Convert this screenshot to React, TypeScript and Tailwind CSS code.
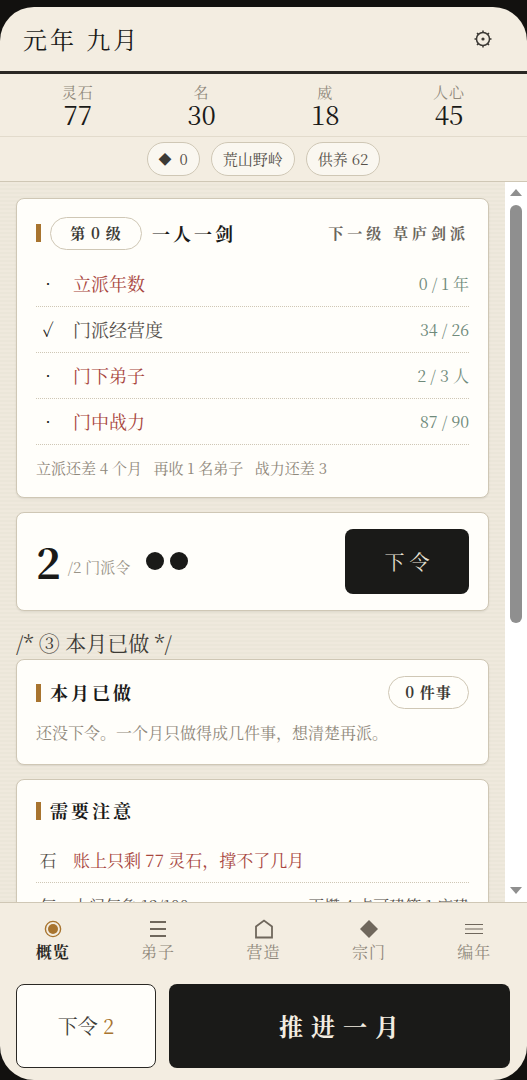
import React from "react";

const Mark = () => <span className="w-[5px] h-[18px] bg-[#a8742f] shrink-0" />;

const reqs = [
  { m: "•", l: "立派年数", v: "0 / 1 年", bad: true },
  { m: "✓", l: "门派经营度", v: "34 / 26", bad: false },
  { m: "•", l: "门下弟子", v: "2 / 3 人", bad: true },
  { m: "•", l: "门中战力", v: "87 / 90", bad: true },
];

const Card = ({ className, children }: { className?: string; children: React.ReactNode }) => (
  <section className={"shrink-0 rounded-[8px] border border-[#cfc7b5] bg-[#fffefa] shadow-[0_1px_2px_rgba(0,0,0,0.08)] " + (className ?? "")}>
    {children}
  </section>
);

const Stat = ({ k, v }: { k: string; v: string }) => (
  <div className="flex flex-col items-center">
    <span className="text-[15px] leading-[18px] tracking-[1px] text-[#8f887b]">{k}</span>
    <span className="text-[26px] leading-[26px] text-[#1a1a18]">{v}</span>
  </div>
);

const Pill = ({ children }: { children: React.ReactNode }) => (
  <span className="h-[34px] flex items-center px-[11px] rounded-full border border-[#cfc7b5] bg-[#faf7f0] text-[15px] text-[#55504a] whitespace-pre">
    {children}
  </span>
);

const Tab = ({ icon, label, active }: { icon: React.ReactNode; label: string; active?: boolean }) => (
  <div className="flex flex-col items-center flex-1">
    <div className="h-[26px] flex items-center justify-center">{icon}</div>
    <span className={"text-[16px] leading-[20px] tracking-[1px] " + (active ? "font-bold text-[#2a2824]" : "text-[#8f887b]")}>{label}</span>
  </div>
);

export default function App() {
  return (
    <div className="w-[527px] h-[1080px] bg-[#12110f] overflow-hidden pt-[7px] font-['Noto_Serif_CJK_SC',serif]">
      <div className="h-[1073px] rounded-t-[34px] rounded-b-[34px] bg-[#f3ede1] overflow-hidden flex flex-col -mb-[7px]">
        <header className="h-[67px] shrink-0 flex items-center justify-between pl-[23px] pr-[34px] border-b-[3px] border-[#2a2824]">
          <span className="text-[24px] tracking-[3px] text-[#1a1a18] whitespace-pre">元年 九月</span>
          <svg width="20" height="20" viewBox="0 0 20 20" fill="none" stroke="#3c3a35" strokeWidth="1.5">
            <circle cx="10" cy="10" r="6.5" />
            <circle cx="10" cy="10" r="1.6" fill="#3c3a35" stroke="none" />
            <path d="M10 1.5v2M10 16.5v2M1.5 10h2M16.5 10h2M4 4l1.4 1.4M14.6 14.6L16 16M16 4l-1.4 1.4M5.4 14.6L4 16" />
          </svg>
        </header>
        <div className="h-[63px] shrink-0 grid grid-cols-4 items-center px-[16px] border-b border-[#e2dbcc]">
          <Stat k="灵石" v="77" />
          <Stat k="名" v="30" />
          <Stat k="威" v="18" />
          <Stat k="人心" v="45" />
        </div>
        <div className="h-[45px] shrink-0 flex items-center justify-center gap-[11px] border-b border-[#cfc7b5]">
          <Pill>
            <span className="text-[#3c3a35] mr-[8px] text-[13px]">◆</span>0
          </Pill>
          <Pill>荒山野岭</Pill>
          <Pill>供养 62</Pill>
        </div>
        <div className="flex-1 min-h-0 flex">
          <main className="flex-1 min-w-0 overflow-hidden bg-[#ebe6d9] bg-[repeating-linear-gradient(0deg,#ebe6d9_0px,#ebe6d9_2px,#efe9dd_2px,#efe9dd_4px)] px-[16px] pt-[16px] flex flex-col">
            <Card className="h-[300px] px-[19px] pt-[17px]">
              <div className="flex items-center h-[34px]">
                <Mark />
                <span className="ml-[9px] h-[33px] w-[92px] flex items-center justify-center rounded-full border border-[#cfc7b5] text-[15px] font-bold text-[#3c3a35] whitespace-pre tracking-[1px]">第 0 级</span>
                <span className="ml-[10px] text-[18px] tracking-[3px] font-bold text-[#1a1a18]">一人一剑</span>
                <span className="ml-auto text-[15px] tracking-[4px] font-bold text-[#6a655c] whitespace-pre">下一级 草庐剑派</span>
              </div>
              <div className="mt-[11px]">
                {reqs.map((r) => (
                  <div key={r.l} className="h-[46px] flex items-center border-b border-dotted border-[#cfc7b5]">
                    <span className="w-[24px] text-center text-[18px] text-[#1a1a18]">{r.m}</span>
                    <span className={"ml-[13px] text-[18px] " + (r.bad ? "text-[#a8463e]" : "text-[#55504a]")}>{r.l}</span>
                    <span className="ml-auto text-[16px] text-[#6f8a7a] whitespace-pre">{r.v}</span>
                  </div>
                ))}
              </div>
              <p className="mt-[12px] text-[15px] text-[#8f887b] whitespace-pre">立派还差 4 个月   再收 1 名弟子   战力还差 3</p>
            </Card>
            <Card className="mt-[14px] h-[99px] pl-[19px] pr-[19px] flex items-center">
              <span className="text-[42px] leading-none font-bold text-[#1a1a18] -mt-[2px]">2</span>
              <span className="ml-[7px] mt-[12px] text-[15px] text-[#9a9488] whitespace-pre">/2 门派令</span>
              <span className="ml-[16px] -mt-[1px] w-[18px] h-[18px] rounded-full bg-[#1a1a18]" />
              <span className="ml-[6px] -mt-[1px] w-[18px] h-[18px] rounded-full bg-[#1a1a18]" />
              <span className="ml-auto w-[124px] h-[65px] rounded-[8px] bg-[#1a1a18] text-[#e8e2d4] flex items-center justify-center text-[20px] whitespace-pre">下 令</span>
            </Card>
            <div className="mt-[16px] h-[32px] flex items-center text-[21px] text-[#3c3a35] whitespace-pre">/* ③ 本月已做 */</div>
            <Card className="h-[106px] px-[19px] pt-[17px]">
              <div className="flex items-center h-[32px]">
                <Mark />
                <span className="ml-[9px] text-[18px] tracking-[3px] font-bold text-[#1a1a18]">本月已做</span>
                <span className="ml-auto h-[33px] w-[81px] flex items-center justify-center rounded-full border border-[#cfc7b5] text-[15px] font-bold text-[#3c3a35] whitespace-pre tracking-[1px]">0 件事</span>
              </div>
              <p className="mt-[12px] text-[16px] text-[#8f887b] whitespace-pre">还没下令。一个月只做得成几件事，想清楚再派。</p>
            </Card>
            <Card className="mt-[14px] h-[200px] px-[19px] pt-[15px]">
              <div className="flex items-center h-[32px]">
                <Mark />
                <span className="ml-[9px] text-[18px] tracking-[3px] font-bold text-[#1a1a18]">需要注意</span>
              </div>
              <div className="mt-[11px] h-[45px] flex items-center border-b border-dotted border-[#cfc7b5]">
                <span className="w-[24px] text-center text-[17px] text-[#55504a]">石</span>
                <span className="ml-[13px] text-[17px] text-[#a8463e] whitespace-pre">账上只剩 77 灵石，撑不了几月</span>
              </div>
              <div className="h-[46px] flex items-center">
                <span className="w-[24px] text-center text-[17px] text-[#55504a]">气</span>
                <span className="ml-[13px] text-[16px] text-[#55504a] whitespace-pre">上门气象 12/100</span>
                <span className="ml-auto text-[16px] text-[#55504a] whitespace-pre">再攒 4 点可建筑 1 座建</span>
              </div>
            </Card>
          </main>
          <aside className="w-[22px] shrink-0 bg-white flex flex-col items-center">
            <svg width="12" height="8" viewBox="0 0 12 8" className="mt-[7px] shrink-0"><path d="M6 0l6 7H0z" fill="#8f8f8f" /></svg>
            <div className="mt-[8px] w-[12px] h-[418px] rounded-full bg-[#8f8f8f]" />
            <svg width="12" height="8" viewBox="0 0 12 8" className="mt-auto mb-[8px] shrink-0"><path d="M6 8l6-7H0z" fill="#8f8f8f" /></svg>
          </aside>
        </div>
        <nav className="h-[78px] shrink-0 flex items-start px-[0px] pt-[13px] border-t border-[#cfc7b5]">
          <Tab active label="概览" icon={<svg width="18" height="18" viewBox="0 0 18 18"><circle cx="9" cy="9" r="7.6" fill="none" stroke="#a8742f" strokeWidth="1.4" /><circle cx="9" cy="9" r="5" fill="#a8742f" /></svg>} />
          <Tab label="弟子" icon={<svg width="18" height="18" viewBox="0 0 18 18" stroke="#6f675c" strokeWidth="2"><path d="M1 2h16M1 9h16M1 16h16" /></svg>} />
          <Tab label="营造" icon={<svg width="20" height="20" viewBox="0 0 20 20" fill="none" stroke="#6f675c" strokeWidth="1.8"><path d="M2 18.5V7.5L10 1.5l8 6v11z" /></svg>} />
          <Tab label="宗门" icon={<svg width="18" height="18" viewBox="0 0 18 18"><path d="M9 0l9 9-9 9-9-9z" fill="#6f675c" /></svg>} />
          <Tab label="编年" icon={<svg width="18" height="12" viewBox="0 0 18 12" stroke="#6f675c" strokeWidth="1.2"><path d="M0 1.5h18M0 6h18M0 10.5h18" /></svg>} />
        </nav>
        <footer className="h-[100px] shrink-0 flex px-[16px] pt-[4px] gap-[13px]">
          <button className="w-[140px] h-[84px] rounded-[8px] border-[1.5px] border-[#2a2824] bg-[#fffefa] text-[20px] text-[#3c3a35] whitespace-pre">下令 <span className="text-[#a8742f]">2</span></button>
          <button className="w-[341px] h-[84px] rounded-[8px] bg-[#1a1a18] text-[24px] font-bold text-[#f3ede1] whitespace-pre tracking-[1px]">推 进 一 月</button>
        </footer>
      </div>
    </div>
  );
}
